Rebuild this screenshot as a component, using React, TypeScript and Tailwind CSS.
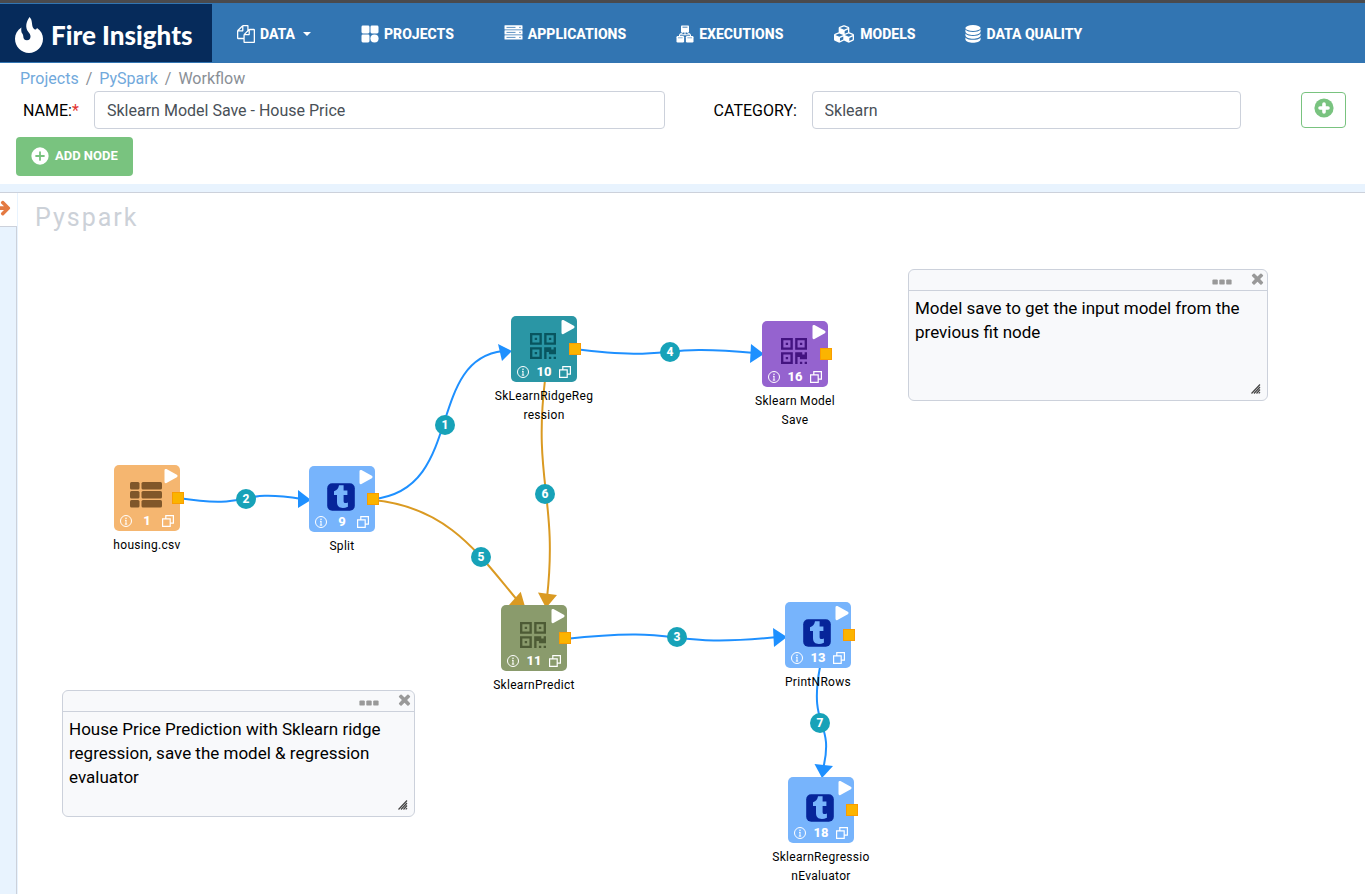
import type { ReactNode } from "react";
import { FaCubes } from "react-icons/fa";

/* ---------- icons ---------- */

function FilesIcon() {
  return (
    <svg viewBox="0 0 1792 1792" className="h-[18px] w-[18px] fill-current" aria-hidden="true">
      <path d="M1696 384q40 0 68 28t28 68v1216q0 40-28 68t-68 28h-960q-40 0-68-28t-28-68v-288h-544q-40 0-68-28t-28-68v-672q0-40 20-88t48-76l408-408q28-28 76-48t88-20h416q40 0 68 28t28 68v328q68-40 128-40h416zm-544 213l-299 299h299v-299zm-640-384l-299 299h299v-299zm196 647l316-316v-416h-384v416q0 40-28 68t-68 28h-416v640h512v-256q0-40 20-88t48-76zm956 804v-1152h-384v416q0 40-28 68t-68 28h-416v640h896z" />
    </svg>
  );
}

function TilesIcon() {
  return (
    <svg viewBox="0 0 18 18" className="h-[18px] w-[18px] fill-current" aria-hidden="true">
      <rect x="0.5" y="0.5" width="8" height="8" rx="1.4" />
      <rect x="9.5" y="0.5" width="8" height="8" rx="1.4" />
      <rect x="0.5" y="9.5" width="8" height="8" rx="1.4" />
      <circle cx="13.5" cy="13.5" r="4.1" />
    </svg>
  );
}

function ServerIcon() {
  return (
    <svg viewBox="0 0 19 15" className="mb-1 h-[15px] w-[19px]" aria-hidden="true">
      {[0, 5, 10].map((y) => (
        <g key={y}>
          <rect x="0.5" y={y + 0.2} width="18" height="4.4" rx="0.6" fill="#fff" />
          <path d={`M2.5 ${y + 2.4}h9`} stroke="#3275b2" strokeWidth="0.8" />
          <circle cx="16" cy={y + 2.4} r="0.7" fill="#3275b2" />
        </g>
      ))}
    </svg>
  );
}

function ExecIcon() {
  return (
    <svg viewBox="0 0 18 18" className="h-[18px] w-[18px]" aria-hidden="true">
      <rect x="5" y="0.5" width="8" height="7" rx="0.8" fill="#fff" />
      <path d="M6.5 2.2h5" stroke="#3275b2" strokeWidth="0.9" />
      <path d="M9 7v3M3.5 11.5V9.8h11v1.7M3.5 9.3L7 7.6M14.5 9.3L11 7.6" stroke="#fff" strokeWidth="1" fill="none" />
      <rect x="0.5" y="11" width="7.6" height="6.5" rx="1.2" fill="#fff" />
      <rect x="9.9" y="11" width="7.6" height="6.5" rx="1.2" fill="#fff" />
      <path d="M2 12.8h4.6M11.4 12.8H16" stroke="#3275b2" strokeWidth="0.6" />
    </svg>
  );
}

function StackIcon() {
  return (
    <svg viewBox="0 0 16 18" className="h-[18px] w-4 fill-current" aria-hidden="true">
      <ellipse cx="8" cy="3" rx="7.6" ry="3" />
      <path d="M0.4 4.6C2 6.6 5 7 8 7s6-.4 7.6-2.4v2.1C15 8.9 11.6 9.9 8 9.9S1 8.9.4 6.7z" />
      <path d="M0.4 8.5C2 10.5 5 10.9 8 10.9s6-.4 7.6-2.4v2.1c-.6 2.2-4 3.2-7.6 3.2s-7-1-7.6-3.2z" />
      <path d="M0.4 12.4C2 14.4 5 14.8 8 14.8s6-.4 7.6-2.4v2.2c-.6 2.2-4 3.2-7.6 3.2s-7-1-7.6-3.2z" />
    </svg>
  );
}

function PlusCircle({ className, cross, arm }: { className: string; cross: number; arm: number }) {
  return (
    <svg viewBox="0 0 20 20" className={className} aria-hidden="true">
      <circle cx="10" cy="10" r="9.6" fill="currentColor" />
      <path
        d={`M10 ${10 - arm}V${10 + arm}M${10 - arm} 10H${10 + arm}`}
        className="stroke-[var(--cross)]"
        strokeWidth={cross}
        strokeLinecap="round"
      />
    </svg>
  );
}

function ArrowRightIcon() {
  return (
    <svg viewBox="0 0 1792 1792" className="h-[17px] w-[17px] shrink-0 fill-[#e47a42]" aria-hidden="true">
      <path d="M1600 960q0 54-37 91l-651 651q-39 37-91 37-51 0-90-37l-75-75q-38-38-38-91t38-91l293-293h-704q-52 0-84.5-37.5t-32.5-90.5v-128q0-53 32.5-90.5t84.5-37.5h704l-293-294q-38-36-38-90t38-90l75-75q38-38 90-38 53 0 91 38l651 651q37 35 37 90z" />
    </svg>
  );
}

function CloseIcon() {
  return (
    <svg viewBox="0 0 1792 1792" className="h-[17px] w-[17px] fill-[#999]" aria-hidden="true">
      <path d="M1490 1322q0 40-28 68l-136 136q-28 28-68 28t-68-28l-294-294-294 294q-28 28-68 28t-68-28l-136-136q-28-28-28-68t28-68l294-294-294-294q-28-28-28-68t28-68l136-136q28-28 68-28t68 28l294 294 294-294q28-28 68-28t68 28l136 136q28 28 28 68t-28 68l-294 294 294 294q28 28 28 68z" />
    </svg>
  );
}

function DotsIcon() {
  return (
    <svg viewBox="0 0 20 6" className="h-[6px] w-5 fill-[#999]" aria-hidden="true">
      <rect x="0.4" y="0.4" width="5.4" height="5.2" rx="1.2" />
      <rect x="7.3" y="0.4" width="5.4" height="5.2" rx="1.2" />
      <rect x="14.2" y="0.4" width="5.4" height="5.2" rx="1.2" />
    </svg>
  );
}

function FlameIcon() {
  return (
    <svg viewBox="0 0 28 36" className="h-9 w-7 fill-white" aria-hidden="true">
      <path d="M14.6 0C18 3.5 16.2 8.5 18.6 11.5C19.8 13 21 12.6 22 10.9C26 13.5 28 17.6 28 21.8C28 29.7 21.8 36 14 36S0 29.7 0 21.8C0 17.2 2.2 13.3 6.4 10.4C6.1 13 6.2 14.9 7.3 16.6C8 17.7 8.3 18.5 8.3 19.6A3.6 3.6 0 0 0 15.5 19.6C15.5 17.5 14.6 16.5 13.2 14.8C10.2 11 10.7 5 14.6 0Z" />
    </svg>
  );
}

function TableIcon() {
  return (
    <svg viewBox="0 0 32 26" className="h-[26px] w-8 fill-[#80572a]" aria-hidden="true">
      {[0, 9, 18].map((y) => (
        <g key={y}>
          <rect x="0" y={y} width="9.5" height="7.4" rx="1.5" />
          <rect x="11.5" y={y} width="20.5" height="7.4" rx="1.5" />
        </g>
      ))}
    </svg>
  );
}

function QrIcon({ color }: { color: string }) {
  return (
    <svg viewBox="0 0 11 11" className="mr-px h-[26px] w-[26px]" fill={color} fillRule="evenodd" aria-hidden="true">
      <path d="M0 0H5V5H0ZM1 1V4H4V1ZM2 2H3V3H2Z" />
      <path d="M6 0H11V5H6ZM7 1V4H10V1ZM8 2H9V3H8Z" />
      <path d="M0 6H5V11H0ZM1 7V10H4V7ZM2 8H3V9H2Z" />
      <path d="M6 6H9V7H10V6H11V9H8V8H7V11H6ZM8 10H9V11H8ZM10 10H11V11H10Z" />
    </svg>
  );
}

function TumblrIcon() {
  return (
    <svg viewBox="0 0 28 28" className="mt-0.5 h-7 w-7" aria-hidden="true">
      <rect x="0.2" y="0.2" width="27.6" height="27.6" rx="5" fill="#06259a" />
      <path
        d="M12 2.3H16.6V7.5H20.4V11.9H16.6V18C16.6 20.2 18 20.6 20.9 19.5V23.7C15 26.4 10 24.5 10 19.2V11.9H7V8.3C10.2 7.3 11.5 5.4 12 2.3Z"
        fill="#77b4fc"
      />
    </svg>
  );
}

/* ---------- header ---------- */

const navItems: { label: string; icon: ReactNode; caret?: boolean }[] = [
  { label: "DATA", icon: <FilesIcon />, caret: true },
  { label: "PROJECTS", icon: <TilesIcon /> },
  { label: "APPLICATIONS", icon: <ServerIcon /> },
  { label: "EXECUTIONS", icon: <ExecIcon /> },
  { label: "MODELS", icon: <FaCubes className="h-5 w-[22px]" aria-hidden="true" /> },
  { label: "DATA QUALITY", icon: <StackIcon /> },
];

function Header() {
  return (
    <header className="flex h-[63px] border-t-[3px] border-[#4a4a4d] bg-[#3275b2] pt-px pb-px">
      <a href="#home" className="flex w-[212px] shrink-0 items-center gap-2 bg-[#062b5b] pt-1 pl-[15px] text-white">
        <FlameIcon />
        <span className="font-[Lato] text-[26px] leading-8 font-black whitespace-nowrap">Fire Insights</span>
      </a>
      <nav className="ml-[25px] flex items-center gap-[50px] pt-0.5 text-white">
        {navItems.map((item) => (
          <a key={item.label} href="#nav" className="flex items-center gap-[5px] text-sm font-extrabold whitespace-nowrap">
            {item.icon}
            {item.label}
            {item.caret && (
              <span className="ml-[3px] border-x-[4px] border-t-[4px] border-x-transparent border-t-white" />
            )}
          </a>
        ))}
      </nav>
    </header>
  );
}

/* ---------- form ---------- */

function WorkflowForm() {
  return (
    <section className="border-b border-[#ccd1db]">
      <nav aria-label="Breadcrumb" className="flex h-7 items-center gap-[7px] px-5 pt-1 text-base text-[#8a8f96]">
        <a href="#projects" className="text-[#71a9dc]">Projects</a>
        <span>/</span>
        <a href="#pyspark" className="text-[#71a9dc]">PySpark</a>
        <span>/</span>
        <span>Workflow</span>
      </nav>
      <div className="flex items-center pr-[19px] pl-[23px]">
        <label htmlFor="wf-name" className="w-[71px] shrink-0 pt-0.5 text-base text-black">
          NAME:<span className="text-[#e3342f]">*</span>
        </label>
        <input
          id="wf-name"
          defaultValue="Sklearn Model Save - House Price"
          className="h-[38px] w-0 flex-[27] rounded border border-[#ccd1db] px-3 text-base text-[#495057]"
        />
        <label htmlFor="wf-category" className="ml-[49px] w-[98px] shrink-0 pt-0.5 text-base text-black">
          CATEGORY:
        </label>
        <input
          id="wf-category"
          defaultValue="Sklearn"
          className="h-[38px] w-0 flex-[20] rounded border border-[#ccd1db] px-3 text-base text-[#495057]"
        />
        <button
          type="button"
          aria-label="Add"
          className="ml-[60px] flex h-9 w-[45px] shrink-0 items-center justify-center rounded border border-[#79c37f] pb-1 text-[#79c37f] [--cross:#fff]"
        >
          <PlusCircle className="h-5 w-5" cross={3.6} arm={4} />
        </button>
      </div>
      <div className="px-4 py-2">
        <button
          type="button"
          className="flex h-[39px] items-center gap-1.5 rounded bg-[#79c37f] px-[15px] pb-0.5 text-[13px] font-bold text-white [--cross:#79c37f]"
        >
          <PlusCircle className="h-[18px] w-[18px]" cross={2} arm={4.4} />
          ADD NODE
        </button>
      </div>
      <div className="h-2 bg-[#e8f3fe]" />
    </section>
  );
}

/* ---------- canvas ---------- */

const BLUE = "#1e90ff";
const GOLD = "#da9a22";

const edges = [
  { id: 1, color: BLUE, path: "M373 306C465 297 425 167 503 158", head: "498,151 512,158 502,168", at: "left-[435px] top-[222px]" },
  { id: 2, color: BLUE, path: "M178 305C256 317 232 295 302 306", head: "298,297 311,307 298,315", at: "left-[236px] top-[296px]" },
  { id: 3, color: BLUE, path: "M565 446C690 432 660 456 778 444", head: "773,435 787,444 774,454", at: "left-[667px] top-[434px]" },
  { id: 4, color: BLUE, path: "M574 156C680 169 650 150 755 160", head: "751,151 764,161 750,170", at: "left-[660px] top-[149px]" },
  { id: 5, color: GOLD, path: "M373 307C449 314 480 363 518 408", head: "520.7,398.7 526,417 509,412", at: "left-[471px] top-[354px]" },
  { id: 6, color: GOLD, path: "M545 187C533 287 558 307 547 405", head: "538,399.5 557,402 546,415", at: "left-[535px] top-[291px]" },
  { id: 7, color: BLUE, path: "M820 474C808 537 835 527 823 576", head: "814.5,571 833,573 822,585", at: "left-[810px] top-[520px]" },
];

const nodes: { id: number; label: string; at: string; bg: string; icon: ReactNode }[] = [
  { id: 1, label: "housing.csv", at: "left-[97px] top-[272px]", bg: "bg-[#f5b670]", icon: <TableIcon /> },
  { id: 9, label: "Split", at: "left-[292px] top-[273px]", bg: "bg-[#77b4fc]", icon: <TumblrIcon /> },
  { id: 10, label: "SkLearnRidgeRegression", at: "left-[494px] top-[123px]", bg: "bg-[#2a96a5]", icon: <QrIcon color="#08555f" /> },
  { id: 16, label: "Sklearn Model Save", at: "left-[745px] top-[128px]", bg: "bg-[#9563cf]", icon: <QrIcon color="#431380" /> },
  { id: 11, label: "SklearnPredict", at: "left-[484px] top-[412px]", bg: "bg-[#8a9b6c]", icon: <QrIcon color="#4d5b35" /> },
  { id: 13, label: "PrintNRows", at: "left-[768px] top-[409px]", bg: "bg-[#77b4fc]", icon: <TumblrIcon /> },
  { id: 18, label: "SklearnRegressionEvaluator", at: "left-[771px] top-[584px]", bg: "bg-[#77b4fc]", icon: <TumblrIcon /> },
];

function NodeCard({ id, label, at, bg, icon }: (typeof nodes)[number]) {
  return (
    <div className={`absolute flex w-[100px] flex-col items-center ${at}`}>
      <div className={`relative flex h-[66px] w-[66px] flex-col justify-end rounded-[5px] ${bg}`}>
        <button type="button" aria-label={`Run ${label}`} className="absolute top-[3px] left-[50px]">
          <svg viewBox="0 0 14 16" className="h-4 w-[14px]" aria-hidden="true">
            <path d="M1.8 2.2L12.2 8L1.8 13.8Z" fill="#fff" stroke="#fff" strokeWidth="2.6" strokeLinejoin="round" />
          </svg>
        </button>
        <span className="flex h-9 items-center justify-center pr-0.5">{icon}</span>
        <div className="flex h-[18px] items-center justify-between pr-1.5 pb-0.5 pl-1.5 text-white">
          <svg viewBox="0 0 12 12" className="h-3 w-3" aria-hidden="true">
            <circle cx="6" cy="6" r="5.5" fill="none" stroke="#fff" />
            <path d="M6 5V9.2M5 5.3H6.3M4.8 9.1H7.2" stroke="#fff" fill="none" />
            <circle cx="6" cy="3.3" r="0.8" fill="#fff" />
          </svg>
          <span className="text-[13px] leading-4 font-extrabold">{id}</span>
          <svg viewBox="0 0 12 12" className="h-3 w-3" aria-hidden="true">
            <path d="M3.8 3.8V0.6H11.4V8.2H8.2M0.6 3.8H8.2V11.4H0.6Z" stroke="#fff" strokeWidth="1.2" fill="none" />
          </svg>
        </div>
        <span className="absolute top-[27px] left-[58px] h-3 w-3 border border-[#fa9d00] bg-[#fbb400]" />
      </div>
      <span className="mt-[5px] max-w-full text-center text-xs leading-[19px] tracking-wide break-words text-black">
        {label}
      </span>
    </div>
  );
}

function Note({ text, place, body }: { text: string; place: string; body: string }) {
  return (
    <div className={`absolute rounded-md border border-[#ccd1db] bg-[#f8f9fb] ${place}`}>
      <div className="flex h-[21px] justify-end gap-[17px] border-b border-[#ccd1db] pr-px">
        <button type="button" aria-label="Note options" className="pt-[3px]">
          <DotsIcon />
        </button>
        <button type="button" aria-label="Close note" className="flex items-start">
          <CloseIcon />
        </button>
      </div>
      <textarea
        aria-label="Note text"
        defaultValue={text}
        className={`block w-full resize-none overflow-hidden bg-transparent px-1.5 py-[5px] text-[17px] leading-6 text-black ${body}`}
      />
      <svg viewBox="0 0 10 10" className="absolute right-1.5 bottom-1.5 h-[10px] w-[10px]" aria-hidden="true">
        <path d="M0.5 9.5L9 0.5M3 9.5L9 3M5.5 9.5L9 5.5M7.8 9.5L9 8" stroke="#444" strokeWidth="1.2" />
      </svg>
    </div>
  );
}

function Canvas() {
  return (
    <main className="relative min-h-[701px] flex-1 overflow-hidden">
      <div className="flex">
        <aside className="flex min-h-[701px] w-[17px] shrink-0 flex-col overflow-hidden">
          <button
            type="button"
            aria-label="Expand panel"
            className="flex h-[34px] items-center justify-end overflow-hidden border-b border-[#ccd1db] bg-white pr-[5px] pb-1"
          >
            <ArrowRightIcon />
          </button>
          <div className="flex-1 border-r border-[#ccd1db] bg-[#e8f3fe]" />
        </aside>
        <h1 className="border-l border-[#e8f3fe] px-[17px] pt-[7px] text-[25px] leading-9 tracking-[2px] text-[#ccd1d8]">
          Pyspark
        </h1>
      </div>
      <svg className="pointer-events-none absolute inset-0 h-full w-full" aria-hidden="true">
        {edges.map((e) => (
          <g key={e.id}>
            <path d={e.path} stroke={e.color} strokeWidth="2" fill="none" />
            <polygon points={e.head} fill={e.color} />
          </g>
        ))}
      </svg>
      {nodes.map((n) => (
        <NodeCard key={n.id} {...n} />
      ))}
      {edges.map((e) => (
        <span
          key={e.id}
          className={`absolute flex h-5 w-5 items-center justify-center rounded-full bg-[#17a2b8] text-xs font-extrabold text-white ${e.at}`}
        >
          {e.id}
        </span>
      ))}
      <Note
        text="Model save to get the input model from the previous fit node"
        place="left-[908px] top-[76px] w-[360px]"
        body="h-[109px]"
      />
      <Note
        text="House Price Prediction with Sklearn ridge regression, save the model & regression evaluator"
        place="left-[62px] top-[497px] w-[353px]"
        body="h-[104px]"
      />
    </main>
  );
}

export default function App() {
  return (
    <div className="flex min-h-screen flex-col bg-white font-[Roboto,sans-serif]">
      <Header />
      <WorkflowForm />
      <Canvas />
    </div>
  );
}
